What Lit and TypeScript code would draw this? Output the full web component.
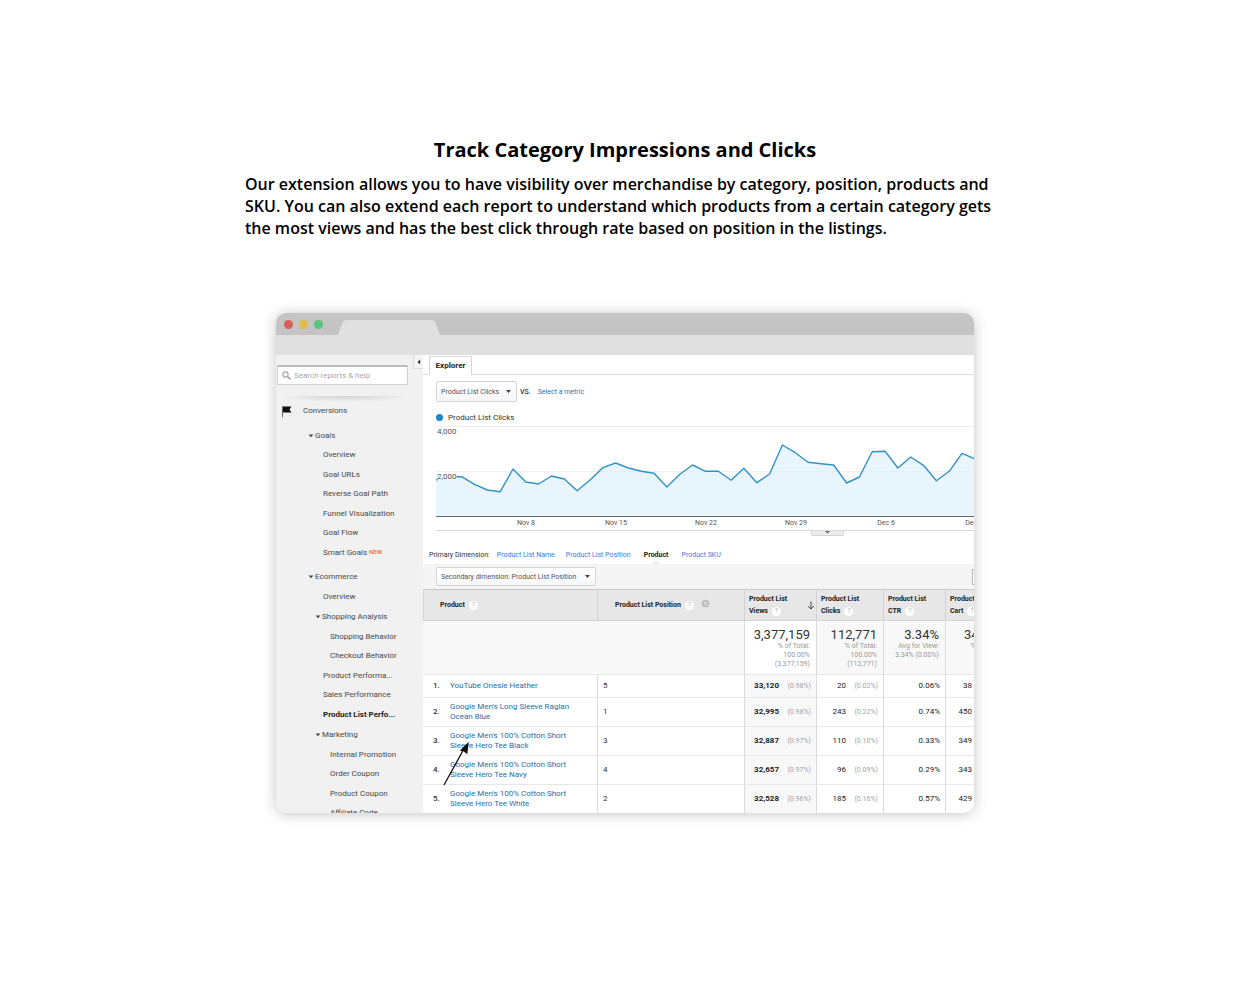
import { LitElement, html, svg, css, nothing } from "lit";
import { customElement } from "lit/decorators.js";
import { classMap } from "lit/directives/class-map.js";

type NavItem = { text: string; level: number; open?: boolean; badge?: string; current?: boolean };

const NAV: NavItem[] = [
  { text: "Goals", level: 1, open: true },
  { text: "Overview", level: 2 },
  { text: "Goal URLs", level: 2 },
  { text: "Reverse Goal Path", level: 2 },
  { text: "Funnel Visualization", level: 2 },
  { text: "Goal Flow", level: 2 },
  { text: "Smart Goals", level: 2, badge: "NEW" },
  { text: "Ecommerce", level: 1, open: true },
  { text: "Overview", level: 2 },
  { text: "Shopping Analysis", level: 2, open: true },
  { text: "Shopping Behavior", level: 3 },
  { text: "Checkout Behavior", level: 3 },
  { text: "Product Performa...", level: 2 },
  { text: "Sales Performance", level: 2 },
  { text: "Product List Perfo...", level: 2, current: true },
  { text: "Marketing", level: 2, open: true },
  { text: "Internal Promotion", level: 3 },
  { text: "Order Coupon", level: 3 },
  { text: "Product Coupon", level: 3 },
  { text: "Affiliate Code", level: 3 },
];

/* Daily clicks as drawing heights, measured down from the 4,000 grid line. */
const SERIES = [
  54, 50.7, 50.7, 58.3, 64, 65.7, 43, 56, 58, 50, 53, 64.7, 54, 41.7, 37, 42, 45.3, 47.3, 61, 48.3, 39,
  45.3, 45.3, 54.3, 42.3, 56.7, 48, 19, 26.7, 36.3, 37.7, 39, 57, 51, 25.7, 25.3, 42, 31, 39.3, 54.7,
  45.3, 27.3, 33,
];
const STEP = 12.83;
const DATES = ["Nov 8", "Nov 15", "Nov 22", "Nov 29", "Dec 6", "Dec 13"];

const COLUMNS = [
  { lines: ["Product List", "Views"], sorted: true },
  { lines: ["Product List", "Clicks"] },
  { lines: ["Product List", "CTR"] },
  { lines: ["Product Adds To", "Cart"] },
];
const TOTALS = [
  { value: "3,377,159", notes: ["% of Total:", "100.00%", "(3,377,159)"] },
  { value: "112,771", notes: ["% of Total:", "100.00%", "(112,771)"] },
  { value: "3.34%", notes: ["Avg for View:", "3.34% (0.00%)"] },
  { value: "34,187", notes: ["% of Total:"] },
];
const ROWS = [
  { name: "YouTube Onesie Heather", pos: 5, views: "33,120", vp: "0.98%", clicks: "20", cp: "0.02%", ctr: "0.06%", cart: "38" },
  { name: "Google Men's Long Sleeve Raglan Ocean Blue", pos: 1, views: "32,995", vp: "0.98%", clicks: "243", cp: "0.22%", ctr: "0.74%", cart: "450" },
  { name: "Google Men's 100% Cotton Short Sleeve Hero Tee Black", pos: 3, views: "32,887", vp: "0.97%", clicks: "110", cp: "0.10%", ctr: "0.33%", cart: "349" },
  { name: "Google Men's 100% Cotton Short Sleeve Hero Tee Navy", pos: 4, views: "32,657", vp: "0.97%", clicks: "96", cp: "0.09%", ctr: "0.29%", cart: "343" },
  { name: "Google Men's 100% Cotton Short Sleeve Hero Tee White", pos: 2, views: "32,528", vp: "0.96%", clicks: "185", cp: "0.16%", ctr: "0.57%", cart: "429" },
];

@customElement("report-nav")
class ReportNav extends LitElement {
  static styles = css`
    :host { display: block; background: #f1f1f1; color: #484848; font-size: 8px; }
    .top { display: flex; justify-content: space-between; align-items: flex-start; padding-left: 1px; }
    .search { display: flex; align-items: center; gap: 3px; box-sizing: border-box; width: 131px; height: 20px;
      margin-top: 10px; padding-left: 4px; background: #fff; border: 1px solid #d0d0d0; border-top: 2px solid #bdbdbd; }
    .search input { flex: 1; min-width: 0; border: 0; padding: 0; background: none; font: inherit; outline: none; }
    .search input::placeholder { color: #a9a9a9; opacity: 1; }
    .collapse { width: 10px; height: 14px; padding: 0; border: 1px solid #dcdcdc; border-width: 0 0 1px 1px;
      background: #f5f5f5; display: grid; place-items: center; }
    .rule { height: 6px; margin: 11px 8px 0 0; background: radial-gradient(ellipse at top, #d2d2d2, #f1f1f1 70%); }
    .section { display: flex; align-items: center; gap: 10px; margin: 0; padding-left: 6px; font-size: 8px;
      font-weight: 400; line-height: 19px; margin-bottom: 6px; margin-top: -1px; }
    ul { list-style: none; margin: 0; padding: 0; }
    li { display: flex; line-height: 19px; padding-left: 47px; white-space: nowrap; }
    li:nth-child(even) { line-height: 20px; }
    .l1 { padding-left: 32px; }
    .l1:not(:first-child) { margin-top: 5px; }
    .l3 { padding-left: 54px; }
    .l2.open { padding-left: 39px; margin-top: 1px; }
    .caret { align-self: center; width: 6px; height: 4px; margin-right: 1px; }
    a { color: inherit; text-decoration: none; }
    .current { font-weight: 700; color: #222; }
    .badge { color: #e8833a; font-size: 6px; font-weight: 700; line-height: 17px; margin-left: 2px; }
  `;
  render() {
    return html`
      <div class="top">
        <label class="search">
          <svg width="9" height="9" viewBox="0 0 9 9" fill="none" stroke="#a2a2a2" stroke-width="1.1">
            <circle cx="3.5" cy="3.5" r="2.6" /><path d="M5.5 5.5L8.4 8.4" stroke-width="1.6" />
          </svg>
          <input type="search" placeholder="Search reports &amp; help" aria-label="Search reports and help" />
        </label>
        <button class="collapse" aria-label="Collapse navigation">
          <svg width="4" height="6" viewBox="0 0 4 6"><path d="M3.2 .6V5.4L.4 3z" fill="#333" /></svg>
        </button>
      </div>
      <div class="rule"></div>
      <h2 class="section">
        <svg width="11" height="12" viewBox="0 0 11 12">
          <path d="M.5 1V12" stroke="#666" /><path d="M1 1.500H9.500L7.500 4.500L9.500 7.500H1z" fill="#111" />
        </svg>
        Conversions
      </h2>
      <ul>
        ${NAV.map(
          (n) => html`<li class=${classMap({ [`l${n.level}`]: true, open: !!n.open, current: !!n.current })}>
            ${n.open
              ? html`<svg class="caret" viewBox="0 0 6 4"><path d="M.6 .5H5.4L3 3.2z" fill="#444" /></svg>`
              : nothing}
            <a href="#">${n.text}</a>${n.badge ? html`<span class="badge">${n.badge}</span>` : nothing}
          </li>`
        )}
      </ul>
    `;
  }
}

@customElement("clicks-chart")
class ClicksChart extends LitElement {
  static styles = css`
    :host { display: block; font-size: 7px; color: #555; }
    .plot { position: relative; height: 91px; overflow: hidden; }
    .plot svg { display: block; }
    .tick { position: absolute; left: 1px; font-size: 8px; line-height: 10px; padding-right: 1px; color: #555; }
    .high { top: 1px; }
    .mid { top: 46px; }
    .dates { display: flex; margin-left: 45px; overflow: hidden; border: 0; }
    .dates span { flex: 0 0 90px; text-align: center; line-height: 13px; }
    .foot { border-top: 1px solid #d8d8d8; display: flex; justify-content: center; padding-left: 245px; }
    .handle { width: 33px; height: 5px; padding: 0; display: grid; place-items: start center; background: #ececec;
      border: 1px solid #d6d6d6; border-top: 0; border-radius: 0 0 2px 2px; }
    .space { height: 1px; }
  `;
  render() {
    const line = SERIES.map((y, i) => `${(i * STEP).toFixed(1)} ${y}`);
    return html`
      <div class="plot">
        <svg width="540" height="91" viewBox="0 0 540 91" fill="none" role="img" aria-label="Product List Clicks per day">
          <path d="M0 .5H540M0 45.5H540" stroke="#efefef" />
          ${svg`<path d="M0 91L${line.join("L")}V91z" fill="#dbeffa" fill-opacity=".65" />
          <path d="M0 54L1.5 53.4M20.5 50.7L${line.slice(2).join("L")}" stroke="#3192c8" stroke-width="1.4" stroke-linejoin="round" />`}
          <path d="M0 90.5H540" stroke="#6a6a6a" />
        </svg>
        <span class="tick high">4,000</span>
        <span class="tick mid">2,000</span>
      </div>
      <div class="dates">${DATES.map((d) => html`<span>${d}</span>`)}</div>
      <div class="foot">
        <button class="handle" aria-label="Expand chart">
          <svg width="5" height="3" viewBox="0 0 5 3"><path d="M0 0H5L2.5 2.6z" fill="#666" /></svg>
        </button>
      </div>
      <div class="space"></div>
    `;
  }
}

@customElement("product-table")
class ProductTable extends LitElement {
  static styles = css`
    :host { display: block; position: relative; overflow: hidden; color: #333; font-size: 8px; }
    table { width: 586px; table-layout: fixed; border-collapse: separate; border-spacing: 0; }
    .c1 { width: 174px; } .c2 { width: 147px; } .c3 { width: 72px; } .c4 { width: 67px; } .c5 { width: 62px; }
    th, td { box-sizing: border-box; padding: 0; font-weight: 400; text-align: left; border-bottom: 1px solid #e8e8e8; }
    .head th { height: 32px; background: #e7e7e7; border-top: 1px solid #cacaca; border-bottom: 1px solid #d2d2d2;
      border-left: 1px solid #d2d2d2; font-size: 7px; font-weight: 700; color: #222; line-height: 12px; white-space: nowrap; }
    .head .first { padding-left: 16px; }
    .head .second { padding-left: 17px; }
    .title, .metric { display: flex; align-items: center; }
    .metric { justify-content: space-between; padding: 0 1px 0 4px; }
    .line { display: flex; align-items: center; }
    .help { display: inline-grid; place-items: center; width: 9px; height: 9px; border-radius: 50%; background: #fff;
      color: #b5b5b5; font-size: 7px; font-weight: 400; line-height: 9px; margin-left: 4px; }
    .close { margin-left: 7px; margin-bottom: 4px; padding: 0; border: 0; background: none; line-height: 0; }
    .sum td { height: 54px; background: #f8f8f8; vertical-align: top; text-align: right; padding: 7px 6px 0 0;
      font-size: 7px; line-height: 9px; color: #999; white-space: nowrap; }
    .sum .sorted { background: #fff; }
    .sum strong { display: block; font-size: 13px; font-weight: 400; line-height: 14px; color: #333; }
    .num { border-left: 1px solid #dadada; }
    .row td, .row th { height: 29px; line-height: 10px; }
    .short td, .short th { height: 23px; }
    .name { display: grid; grid-template-columns: 17px 130px; align-items: center; padding-left: 10px; color: #333; }
    .name span { font-weight: 500; }
    a { color: #2a6da8; text-decoration: none; }
    .row .pos { border-left: 1px solid #dadada; padding-left: 5px; }
    .row .num { text-align: right; padding-right: 5px; white-space: nowrap; color: #222; }
    .row .sorted { background: #f8f8f8; }
    .row .sorted b { font-weight: 700; }
    .row b { font-weight: 400; }
    .pct { display: inline-block; width: 32px; font-size: 7px; color: #a4a4a4; }
    .pointer { position: absolute; left: 18px; top: 150px; }
  `;
  render() {
    const help = html`<span class="help">?</span>`;
    return html`
      <table>
        <colgroup><col class="c1" /><col class="c2" /><col class="c3" /><col class="c4" /><col class="c5" /><col /></colgroup>
        <thead>
          <tr class="head">
            <th class="first"><div class="title">Product${help}</div></th>
            <th class="second"><div class="title">Product List Position${help}
              <button class="close" aria-label="Remove dimension">
                <svg width="9" height="9" viewBox="0 0 9 9"><circle cx="4.5" cy="4.5" r="3.8" fill="#bdbdbd" />
                  <path d="M3 3L6 6M6 3L3 6" stroke="#e7e7e7" /></svg>
              </button></div></th>
            ${COLUMNS.map(
              (c) => html`<th><div class="metric">
                <div>${c.lines[0]}<div class="line">${c.lines[1]}${help}</div></div>
                ${c.sorted
                  ? html`<svg width="8" height="9" viewBox="0 0 8 9" fill="none" stroke="#444"><path d="M4 .5V8M1 5L4 8L7 5" /></svg>`
                  : nothing}
              </div></th>`
            )}
          </tr>
        </thead>
        <tbody>
          <tr class="sum">
            <td colspan="2"></td>
            ${TOTALS.map(
              (t, i) => html`<td class=${classMap({ num: true, sorted: i === 0 })}>
                <strong>${t.value}</strong>${t.notes.map((n) => html`<div>${n}</div>`)}
              </td>`
            )}
          </tr>
          ${ROWS.map(
            (r, i) => html`<tr class=${classMap({ row: true, short: i === 0 })}>
              <th scope="row"><div class="name"><span>${i + 1}.</span><a href="#">${r.name}</a></div></th>
              <td class="pos">${r.pos}</td>
              <td class="num sorted"><b>${r.views}</b><span class="pct">(${r.vp})</span></td>
              <td class="num"><b>${r.clicks}</b><span class="pct">(${r.cp})</span></td>
              <td class="num">${r.ctr}</td>
              <td class="num"><b>${r.cart}</b><span class="pct"></span></td>
            </tr>`
          )}
        </tbody>
      </table>
      <svg class="pointer" width="30" height="48" viewBox="0 0 30 48">
        <path d="M3 46L24 8" stroke="#111" stroke-width="1.3" />
        <path d="M27.7 2.7L18.7 11.7L22.6 12.2L26.3 15.3z" fill="#111" />
      </svg>
    `;
  }
}

@customElement("app-root")
class AppRoot extends LitElement {
  static styles = css`
    :host { display: block; background: #fff; color: #000; font-family: "Open Sans", sans-serif; }
    main { max-width: 760px; margin: 0 auto; padding: 136px 0 180px; }
    h1 { margin: 0; text-align: center; font-size: 20px; font-weight: 700; line-height: 28px; }
    .lead { margin: 9px 0 0; font-size: 16px; font-weight: 600; line-height: 22px; }
    .window { margin: 74px 31px 0; border-radius: 10px; overflow: hidden; background: #fff;
      box-shadow: 0 1px 14px rgba(0, 0, 0, 0.24); font-family: Roboto, sans-serif; }
    .titlebar { display: flex; align-items: flex-end; height: 22px; background: #c4c4c4; }
    .lights { display: flex; gap: 5px; align-self: center; padding-left: 8px; }
    .light { width: 9px; height: 9px; border-radius: 50%; }
    .red { background: #d4605a; } .yellow { background: #e0bd48; } .green { background: #5bc57c; }
    .lights { gap: 6px; }
    .tabshape { margin-left: 15px; display: block; }
    .toolbar { height: 20px; background: #e0e0e0; }
    .body { display: grid; grid-template-columns: 147px minmax(0, 1fr); max-height: 458px; overflow: hidden; }
    .report { overflow: hidden; font-size: 7px; color: #333; }
    .tabs { display: flex; height: 20px; padding-top: 1px; box-sizing: border-box; }
    .tabs::before { content: ""; width: 6px; border-bottom: 1px solid #dedede; }
    .tabs::after { content: ""; flex: 1; border-bottom: 1px solid #dedede; }
    .tab { width: 43px; padding: 0 0 1px; border: 1px solid #d6d6d6; border-bottom: 0; background: #fff; font: 700 8px Roboto, sans-serif; color: #222; }
    .controls { display: flex; align-items: center; padding: 6px 0 0 13px; }
    .drop { position: relative; display: flex; align-items: center; }
    select { appearance: none; box-sizing: border-box; height: 21px; width: 81px; padding: 0 14px 0 4px; font: 7px Roboto, sans-serif;
      color: #555; background: linear-gradient(#fff, #f6f6f6); border: 1px solid #d4d4d4; border-radius: 2px; }
    .wide select { width: 160px; height: 19px; }
    .drop svg { position: absolute; right: 6px; pointer-events: none; }
    .vs { font-weight: 500; margin: 0 7px 0 3px; }
    a { text-decoration: none; color: #2e74b8; }
    .legend { display: flex; align-items: center; gap: 5px; margin: 10px 0 3px 13px; font-size: 8px; line-height: 11px; }
    .dot { width: 7px; height: 7px; border-radius: 50%; background: #1e88c7; }
    clicks-chart { margin-left: 13px; }
    .dims { display: flex; gap: 11px; padding: 12px 0 3px 6px; line-height: 12px; white-space: nowrap; }
    .dims span { margin-right: -4px; }
    .dims a { color: #3b78e7; }
    .dims .on { position: relative; color: #222; font-weight: 700; margin: 0 2px; }
    .on::after { content: ""; position: absolute; left: 50%; top: 12px; margin-left: -4px; border: 4px solid transparent;
      border-top: 0; border-bottom: 3px solid #e9e9e9; }
    .filter { display: flex; justify-content: space-between; align-items: center; height: 25px; padding-left: 13px;
      background: #f5f5f5; overflow: hidden; }
    .tool { width: 16px; height: 16px; margin-right: -14px; padding: 0; border: 1px solid #b5b5b5; background: #fff; }
  `;
  render() {
    const arrow = html`<svg width="5" height="3" viewBox="0 0 5 3"><path d="M0 0H5L2.5 3z" fill="#444" /></svg>`;
    return html`
      <main>
        <h1>Track Category Impressions and Clicks</h1>
        <p class="lead">
          Our extension allows you to have visibility over merchandise by category, position, products and SKU. You can
          also extend each report to understand which products from a certain category gets the most views and has the
          best click through rate based on position in the listings.
        </p>
        <div class="window">
          <div class="titlebar">
            <div class="lights"><i class="light red"></i><i class="light yellow"></i><i class="light green"></i></div>
            <svg class="tabshape" width="102" height="15" viewBox="0 0 102 15">
              <path d="M0 15L4.5 3Q5.5 0 9 0H93Q96.5 0 97.5 3L102 15z" fill="#e0e0e0" />
            </svg>
          </div>
          <div class="toolbar"></div>
          <div class="body">
            <report-nav></report-nav>
            <section class="report">
              <div class="tabs"><button class="tab">Explorer</button></div>
              <div class="controls">
                <span class="drop"><select aria-label="Metric"><option>Product List Clicks</option></select>${arrow}</span>
                <span class="vs">VS.</span>
                <a href="#">Select a metric</a>
              </div>
              <div class="legend"><i class="dot"></i>Product List Clicks</div>
              <clicks-chart></clicks-chart>
              <nav class="dims">
                <span>Primary Dimension:</span>
                <a href="#">Product List Name</a>
                <a href="#">Product List Position</a>
                <a class="on" href="#">Product</a>
                <a href="#">Product SKU</a>
              </nav>
              <div class="filter">
                <span class="drop wide">
                  <select aria-label="Secondary dimension"><option>Secondary dimension: Product List Position</option></select>${arrow}
                </span>
                <button class="tool" aria-label="Table view"></button>
              </div>
              <product-table></product-table>
            </section>
          </div>
        </div>
      </main>
    `;
  }
}
